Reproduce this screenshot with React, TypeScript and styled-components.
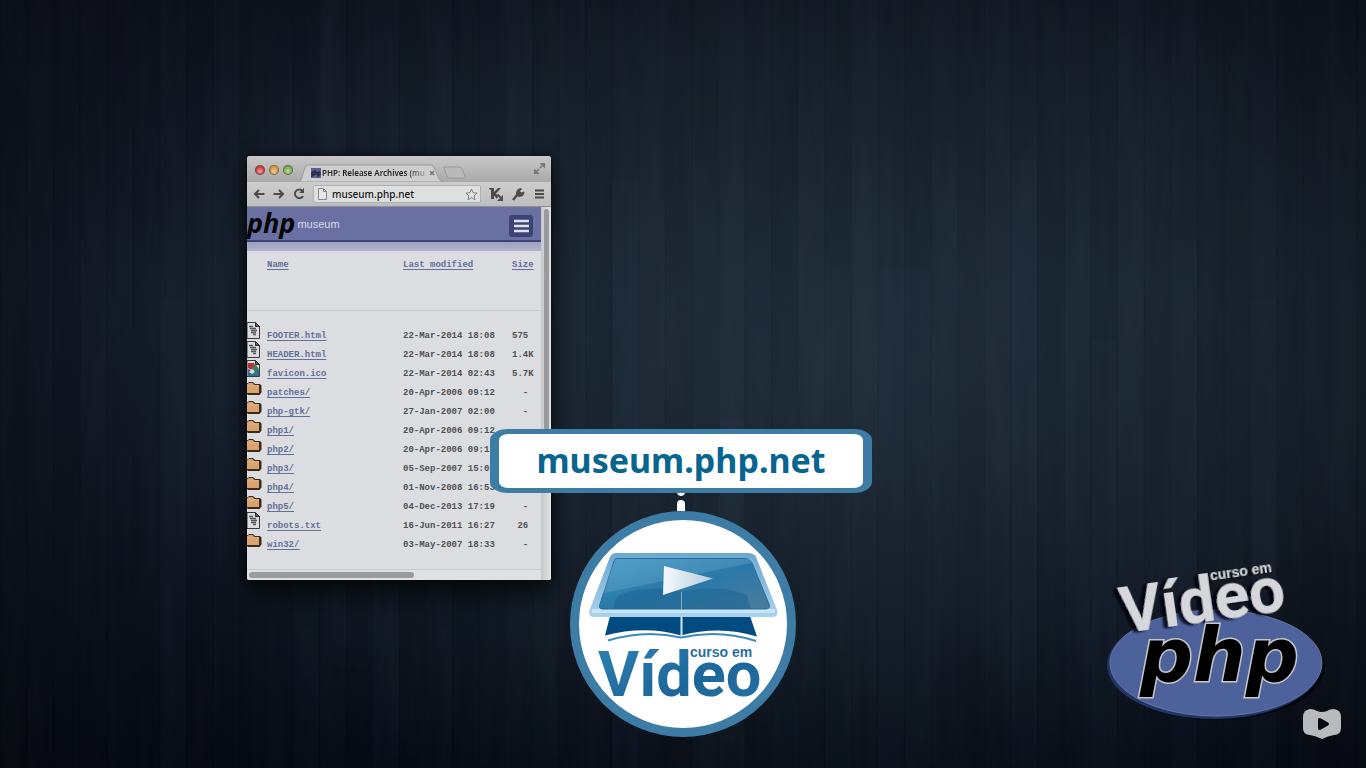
import React from "react";
import styled, { createGlobalStyle } from "styled-components";

const Global = createGlobalStyle`
  *{box-sizing:border-box}
  body{margin:0;background:#0b101b}
  button,input{font:inherit;color:inherit;border:0;padding:0;margin:0;background:none}
`;

const Stage = styled.main`
  position: relative;
  min-height: 100vh;
  overflow: hidden;
  font-family: "Noto Sans", "Open Sans", sans-serif;
  background:
    radial-gradient(ellipse 60% 64% at 62% 46%, rgba(44, 60, 70, 0.62), rgba(38, 54, 64, 0.38) 50%, rgba(20, 30, 44, 0) 100%),
    linear-gradient(90deg, rgba(8, 9, 15, 0.4), rgba(8, 9, 15, 0) 20%, rgba(8, 9, 15, 0) 85%, rgba(8, 9, 15, 0.4)),
    linear-gradient(180deg, #0f131e 0%, #161f2d 38%, #121926 62%, #060a13 100%);
`;

const Wood = styled.svg`
  position: absolute;
  inset: 0;
  width: 100%;
  height: 100%;
`;

const BrowserWindow = styled.section`
  position: absolute;
  top: 156px;
  left: calc(50% - 436px);
  width: 304px;
  background: #dcdde0;
  border-radius: 3px 3px 2px 2px;
  overflow: hidden;
  box-shadow: 0 14px 28px rgba(0, 0, 0, 0.7), 0 0 6px rgba(0, 0, 0, 0.5);
`;

const TitleBar = styled.div`
  display: flex;
  align-items: flex-end;
  height: 26px;
  padding-left: 8px;
  background: linear-gradient(#c8c8c8, #a9a9a9);
`;

const Lights = styled.div`
  display: flex;
  gap: 4px;
  padding-bottom: 7px;
`;

const Light = styled.button<{ $tone: string }>`
  width: 10px;
  height: 10px;
  border-radius: 50%;
  border: 1px solid rgba(60, 50, 50, 0.55);
  background: radial-gradient(circle at 50% 65%, rgba(255, 255, 255, 0.55), transparent 60%), ${(p) => p.$tone};
`;

const Tab = styled.div`
  position: relative;
  display: flex;
  align-items: center;
  width: 144px;
  height: 18px;
  margin-left: 6px;
  padding-left: 12px;
  color: #1e1e1e;
  font-size: 8px;
  font-weight: 600;
  line-height: 18px;
`;

const TabShape = styled.svg`
  position: absolute;
  inset: 0;
`;

const Favicon = styled.svg`
  position: relative;
  flex: none;
`;

const TabTitle = styled.span`
  position: relative;
  width: 104px;
  margin-left: 1px;
  overflow: hidden;
  white-space: nowrap;
  mask-image: linear-gradient(90deg, #000 80%, rgba(0, 0, 0, 0.2));
`;

const TabClose = styled.button`
  position: relative;
  display: flex;
  margin-left: 3px;
`;

const NewTab = styled.button`
  display: flex;
  height: 18px;
`;

const Expand = styled.button`
  display: flex;
  margin: 0 6px 8px auto;
`;

const Toolbar = styled.div`
  display: flex;
  align-items: center;
  height: 25px;
  padding: 0 2px;
  background: linear-gradient(#cdcdcd, #bdbdbd);
  border-bottom: 1px solid #8f8f92;
  color: #4b4b4b;
`;

const ToolButton = styled.button`
  display: flex;
  justify-content: center;
  width: 20px;
  flex: none;
`;

const WideButton = styled(ToolButton)`
  width: 22px;
`;

const AddressBar = styled.div`
  display: flex;
  align-items: center;
  flex: 1;
  min-width: 0;
  height: 18px;
  margin: 0 4px;
  padding: 0 2px 0 4px;
  border: 1px solid #b0b0b0;
  border-radius: 2px;
  background: #dedfe0;
`;

const AddressInput = styled.input`
  flex: 1;
  min-width: 0;
  margin-left: 5px;
  color: #161616;
  font-size: 10px;
  font-weight: 500;
  line-height: 16px;
  outline: none;
`;

const Viewport = styled.div`
  display: grid;
  grid-template-columns: 1fr 10px;
  grid-template-rows: auto 10px;
`;

const Page = styled.div`
  min-width: 0;
  padding-bottom: 14px;
  background: #dcdde0;
  border-bottom: 1px solid #c9cacd;
`;

const PhpHeader = styled.header`
  display: flex;
  align-items: center;
  height: 35px;
  padding-right: 8px;
  background: #6a70a2;
  border-bottom: 2px solid #3a4173;
`;

const PhpMark = styled.a`
  display: flex;
  flex: 1;
  align-items: center;
  color: #d8d9ec;
  font-family: "Liberation Sans", sans-serif;
  font-size: 11px;
  text-decoration: none;
`;

const PhpWord = styled.strong`
  margin-right: 2px;
  margin-top: -2px;
  color: #050505;
  font-family: "Noto Sans", sans-serif;
  font-size: 27px;
  font-style: italic;
  font-weight: 700;
  line-height: 32px;
`;

const MenuButton = styled.button`
  display: flex;
  align-items: center;
  justify-content: center;
  width: 24px;
  height: 22px;
  margin-top: 4px;
  border-radius: 3px;
  background: #3b4276;
`;

const SubBand = styled.div`
  height: 9px;
  background: linear-gradient(#9ea2c0, #b1b3ca);
`;

const Listing = styled.table`
  width: 100%;
  border-collapse: collapse;
  table-layout: fixed;
  color: #505155;
  font-family: "Liberation Mono", monospace;
  font-size: 9px;
  font-weight: 700;
  text-align: left;

  a {
    color: #62709a;
    text-underline-offset: 2px;
  }
  td,
  th {
    height: 19px;
    padding: 0;
    line-height: 19px;
    white-space: pre;
    font-weight: 700;
  }
  thead th {
    height: 59px;
    padding-top: 5px;
    vertical-align: top;
    border-bottom: 1px solid #cbccd0;
  }
  tbody::before {
    content: "";
    display: block;
    height: 16px;
  }
`;

const Col = styled.col<{ $w?: number }>`
  width: ${(p) => (p.$w ? p.$w + "px" : "auto")};
`;

const IconCell = styled.td`
  vertical-align: top;
  svg {
    display: block;
    margin-top: -5px;
  }
`;

const VerticalTrack = styled.div`
  grid-row: 1 / 3;
  grid-column: 2;
  padding: 2px 2px 0 3px;
  background: linear-gradient(90deg, #c6c7c9, #e2e3e4);
`;

const VerticalThumb = styled.div`
  height: 260px;
  border-radius: 3px;
  background: #989a9c;
`;

const HorizontalTrack = styled.div`
  padding: 2px;
  background: #dfe0e2;
`;

const HorizontalThumb = styled.div`
  width: 165px;
  height: 6px;
  border-radius: 3px;
  background: #9a9b9e;
`;

const Pointer = styled.aside`
  position: absolute;
  top: 429px;
  left: calc(50% - 193px);
  display: flex;
  flex-direction: column;
  align-items: center;
  width: 382px;
`;

const Callout = styled.a`
  width: 100%;
  padding-bottom: 2px;
  border: solid #3d7ca5;
  border-width: 5px 9px;
  border-radius: 18px / 11px;
  background: #fff;
  color: #07658f;
  font-size: 34px;
  font-weight: 700;
  line-height: 52px;
  text-align: center;
  text-decoration: none;
`;

const Rope = styled.svg`
  display: block;
`;

const Badge = styled.svg`
  display: block;
  margin-left: 4px;
`;

const CourseLogo = styled.svg`
  position: absolute;
  right: 26px;
  bottom: 38px;
`;

const WatchButton = styled.button`
  position: absolute;
  right: 25px;
  bottom: 29px;
  display: flex;
`;

type Kind = "text" | "image" | "folder";

const files: { kind: Kind; name: string; date: string; size: string }[] = [
  { kind: "text", name: "FOOTER.html", date: "22-Mar-2014 18:08", size: "575" },
  { kind: "text", name: "HEADER.html", date: "22-Mar-2014 18:08", size: "1.4K" },
  { kind: "image", name: "favicon.ico", date: "22-Mar-2014 02:43", size: "5.7K" },
  { kind: "folder", name: "patches/", date: "20-Apr-2006 09:12", size: "  -" },
  { kind: "folder", name: "php-gtk/", date: "27-Jan-2007 02:00", size: "  -" },
  { kind: "folder", name: "php1/", date: "20-Apr-2006 09:12", size: "  -" },
  { kind: "folder", name: "php2/", date: "20-Apr-2006 09:12", size: "  -" },
  { kind: "folder", name: "php3/", date: "05-Sep-2007 15:05", size: "  -" },
  { kind: "folder", name: "php4/", date: "01-Nov-2008 16:53", size: "  -" },
  { kind: "folder", name: "php5/", date: "04-Dec-2013 17:19", size: "  -" },
  { kind: "text", name: "robots.txt", date: "16-Jun-2011 16:27", size: " 26" },
  { kind: "folder", name: "win32/", date: "03-May-2007 18:33", size: "  -" },
];

function FileIcon({ kind }: { kind: Kind }) {
  if (kind === "folder") {
    return (
      <svg width="15" height="17" viewBox="0 0 15 17">
        <path d="M0 4h1l1-1h4l2 2h5l1.500 1.500v7l-2 2.500H1L0 15z" fill="#3a2a1c" />
        <path d="M0 5l2-1h3.500l2 2h4.500v8H0z" fill="#d9a370" />
        <path d="M0 7h12" stroke="#e4b585" />
      </svg>
    );
  }
  return (
    <svg width="15" height="17" viewBox="0 0 15 17">
      <path d="M0 .5h8.500l4 4v12H0z" fill="#dcdcde" stroke="#3a3a3c" />
      <path d="M8.500.5v4h4z" fill="#55565a" stroke="#2e2e30" />
      {kind === "text" ? (
        <path d="M2 4.500h4M3 6.500h6M4 8.500h6M4 10.500h5M6 12.500h3" stroke="#55565a" strokeWidth="1.600" />
      ) : (
        <>
          <path d="M1 3h6l2 4-4 3-4-2z" fill="#b8333a" />
          <path d="M5 8l4-3 3 4-3 4z" fill="#2c8a56" />
          <path d="M1 9l5 2 6-1v6H1z" fill="#2f7189" />
          <path d="M2 12l3-3 3 3-3 2z" fill="#d7dde0" />
        </>
      )}
    </svg>
  );
}

const PLANK = 26.6;
const shades = [5, 2, 6, 1, 3, 6, 2, 4, 1, 5, 3, 6, 0, 4, 2, 5, 1, 6, 3, 0, 5, 2, 6, 3, 1, 4, 5, 0, 3, 6, 1, 5, 0, 3, 6, 2, 4, 1, 3, 6, 2, 6, 1, 4, 3, 6, 5, 2, 6, 4, 1, 5];
const seams = [
  [6, 300], [11, 214], [14, 405], [20, 320], [23, 180], [26, 160], [27, 420], [29, 392], [31, 271],
  [33, 271], [34, 271], [38, 160], [41, 340], [44, 240], [47, 300],
];

function WoodGrain() {
  return (
    <Wood viewBox="0 0 1366 768" preserveAspectRatio="none" aria-hidden="true">
      <defs>
        <filter id="grain" x="0" y="0" width="100%" height="100%">
          <feTurbulence type="fractalNoise" baseFrequency="0.05 0.006" numOctaves="2" seed="7" />
          <feColorMatrix values="0 0 0 0 0.300  0 0 0 0 0.380  0 0 0 0 0.440  0.700 0 0 0 -0.260" />
        </filter>
      </defs>
      <rect width="1366" height="768" filter="url(#grain)" opacity="0.08" />
      {shades.map((shade, i) => (
        <g key={i} fill="#02050c">
          <rect x={i * PLANK} width={PLANK} height="768" opacity={shade * 0.022} />
          <rect x={i * PLANK} width="1" height="768" opacity="0.08" />
        </g>
      ))}
      {seams.map(([i, y]) => (
        <rect key={i} x={i * PLANK} y={y} width={PLANK} height={768 - y} fill="#5b7f92" opacity="0.035" />
      ))}
    </Wood>
  );
}

function CourseBadge() {
  return (
    <Badge width="226" height="226" viewBox="570 511 226 226" role="img" aria-label="Curso em Vídeo">
      <defs>
        <linearGradient id="screen" x1="0" y1="0" x2="1" y2="1">
          <stop offset="0" stopColor="#3f97c4" />
          <stop offset="0.500" stopColor="#2a79a8" />
          <stop offset="1" stopColor="#4d7c9b" />
        </linearGradient>
        <linearGradient id="frame" x1="0" y1="0" x2="0" y2="1">
          <stop offset="0" stopColor="#6ba8d2" />
          <stop offset="1" stopColor="#a9d2ee" />
        </linearGradient>
        <linearGradient id="play" x1="0" y1="0" x2="1" y2="0">
          <stop offset="0" stopColor="#f4f8fc" />
          <stop offset="1" stopColor="#b6cddd" />
        </linearGradient>
        <linearGradient id="word" x1="0" y1="0" x2="1" y2="1">
          <stop offset="0" stopColor="#2f83b5" />
          <stop offset="0.600" stopColor="#1d6699" />
          <stop offset="1" stopColor="#2673a6" />
        </linearGradient>
      </defs>
      <circle cx="683" cy="624" r="108.500" fill="#fff" stroke="#3d7ca5" strokeWidth="9" />
      <path d="M610 616L605 635.500Q645 625 681 635.500Q720 625 757 636.500L750 616Z" fill="#024b80" />
      <path d="M681.500 616v20" stroke="#d6e9f5" strokeWidth="2" />
      <path d="M608 640.500Q645 629 681 637.500Q719 629 756 641" fill="none" stroke="#3d8ab9" strokeWidth="2" />
      <path d="M616 553H748Q754 553 756 557L777 610Q779 617 772 617H594Q587 617 590 609L610 557Q612 553 616 553Z" fill="url(#frame)" />
      <path d="M592 611H775" stroke="#c6e4f8" strokeWidth="4" />
      <path d="M617 558.500H744Q750 558.500 752 563L769 604Q771 609 765 609H603Q598 609 600 604L614 561Q615 558.500 617 558.500Z" fill="url(#screen)" stroke="#286d95" />
      <path d="M617 596Q650 583 681 592Q719 583 747 595L751 609H613Z" fill="#1b6496" opacity="0.550" />
      <path d="M599 594L756 562L751 559H616Z" fill="#a8d2e8" opacity="0.180" />
      <path d="M681.500 592v17" stroke="#7db0ce" />
      <path d="M664 566L713 578.500L663 595Z" fill="url(#play)" />
      <text x="598" y="696" fontFamily="Roboto, Liberation Sans, sans-serif" fontWeight="700" fontSize="63" fill="url(#word)">Vídeo</text>
      <text x="690" y="657" fontFamily="Liberation Sans, sans-serif" fontWeight="700" fontSize="14" fill="#286f9f">curso em</text>
    </Badge>
  );
}

function PhpCourseLogo() {
  return (
    <CourseLogo width="250" height="190" viewBox="1090 540 250 190" role="img" aria-label="Curso em Vídeo PHP">
      <defs>
        <filter id="drop" x="-20%" y="-20%" width="140%" height="140%">
          <feDropShadow dx="-5" dy="1" stdDeviation="1" floodColor="#020409" floodOpacity="0.850" />
        </filter>
      </defs>
      <ellipse cx="1217" cy="667" rx="108" ry="53" fill="#03060d" />
      <ellipse cx="1214" cy="665" rx="107" ry="54" fill="#1f3566" />
      <ellipse cx="1216" cy="663" rx="106" ry="53" fill="#4d629b" stroke="#66759f" strokeWidth="1" />
      <g transform="translate(1139 631) rotate(-8)" filter="url(#drop)" fill="#d6d7da">
        <text x="-16" y="0" fontFamily="Roboto, Liberation Sans, sans-serif" fontWeight="700" fontSize="64">Vídeo</text>
        <text x="78" y="-40" fontFamily="Liberation Sans, sans-serif" fontWeight="700" fontSize="14">curso em</text>
      </g>
      <text x="1140" y="681" fontFamily="DejaVu Sans, sans-serif" fontWeight="700" fontStyle="italic" fontSize="74" fill="#000" stroke="#c4c5c8" strokeWidth="3" paintOrder="stroke">php</text>
    </CourseLogo>
  );
}

export default function App() {
  return (
    <Stage>
      <Global />
      <WoodGrain />
      <BrowserWindow aria-label="PHP: Release Archives">
        <TitleBar>
          <Lights>
            <Light $tone="#cf3f45" aria-label="Close" />
            <Light $tone="#d79a3c" aria-label="Minimize" />
            <Light $tone="#7fae4d" aria-label="Zoom" />
          </Lights>
          <Tab>
            <TabShape width="144" height="18" viewBox="0 0 144 18">
              <path d="M0 18C4 17 4 2 9 1H132C137 2 138 17 144 18Z" fill="#cecece" stroke="#999" />
            </TabShape>
            <Favicon width="10" height="10" viewBox="0 0 10 10">
              <path d="M0 0h10v10H0z" fill="#5b6094" />
              <path d="M1 9V4h2v3H1M4 2v5M4 4h2v3M7 9V4h2v3H7" stroke="#17182c" fill="none" />
            </Favicon>
            <TabTitle>PHP: Release Archives (mu</TabTitle>
            <TabClose aria-label="Close tab">
              <svg width="6" height="6" viewBox="0 0 6 6"><path d="M1 1l4 4M5 1L1 5" stroke="#777" strokeWidth="1.500" /></svg>
            </TabClose>
          </Tab>
          <NewTab aria-label="New tab">
            <svg width="24" height="18" viewBox="0 0 24 18"><path d="M1 4.500Q0 3 2 3H16Q18 3 19 5L22 12Q23 14 21 14H7Q5 14 4 12Z" fill="#b9b9b9" stroke="#989898" /></svg>
          </NewTab>
          <Expand aria-label="Full screen">
            <svg width="11" height="11" viewBox="0 0 11 11"><path d="M5.500 0H11v5.500zM0 5.500V11h5.500z" fill="#777" /><path d="M6 5l3-3M2 9l3-3" stroke="#777" strokeWidth="1.500" /></svg>
          </Expand>
        </TitleBar>
        <Toolbar>
          <ToolButton aria-label="Back">
            <svg width="12" height="10" viewBox="0 0 12 10"><path d="M6 1L2 5l4 4M2 5h9.500" fill="none" stroke="currentColor" strokeWidth="2" /></svg>
          </ToolButton>
          <ToolButton aria-label="Forward">
            <svg width="12" height="10" viewBox="0 0 12 10"><path d="M6 1l4 4-4 4M10 5H.5" fill="none" stroke="currentColor" strokeWidth="2" /></svg>
          </ToolButton>
          <ToolButton aria-label="Reload">
            <svg width="12" height="12" viewBox="0 0 12 12"><path d="M9.500 3A4.300 4.300 0 1 0 10 8" fill="none" stroke="currentColor" strokeWidth="2" /><path d="M11 0v5H6z" fill="currentColor" /></svg>
          </ToolButton>
          <AddressBar>
            <svg width="9" height="12" viewBox="0 0 9 12"><path d="M.5.500H5.500L8.500 3.500V11.500H.5ZM5.500.500V3.500H8.500" fill="#e6e6e6" stroke="#888" /></svg>
            <AddressInput aria-label="Address" defaultValue="museum.php.net" />
            <svg width="13" height="13" viewBox="0 0 13 13"><path d="M6.500 1l1.600 3.700 4 .4-3 2.700.9 4-3.500-2.100L3 11.800l.9-4-3-2.700 4-.4z" fill="#e4e4e4" stroke="#808080" /></svg>
          </AddressBar>
          <WideButton aria-label="Extension">
            <svg width="15" height="14" viewBox="0 0 15 14"><path d="M0 1h5v4L9 1h3L7 6.500 9 9 8 12 5 8.500V12H2V3L0 2z" fill="currentColor" /><path d="M8.500 7.500l3 3" stroke="currentColor" strokeWidth="2" /><path d="M14 8v6H8z" fill="currentColor" /></svg>
          </WideButton>
          <WideButton aria-label="Tools">
            <svg width="13" height="13" viewBox="0 0 13 13"><path d="M1 12l5-6" stroke="currentColor" strokeWidth="2.500" /><path d="M4 4L6 1l3-1 1 1-2 2 1 1.500 3-1 .5 1L11 8 7 9 4 7z" fill="currentColor" /></svg>
          </WideButton>
          <ToolButton aria-label="Menu">
            <svg width="9" height="10" viewBox="0 0 9 10"><path d="M0 1.500h9M0 5h9M0 8.500h9" stroke="currentColor" strokeWidth="2" /></svg>
          </ToolButton>
        </Toolbar>
        <Viewport>
          <Page>
            <PhpHeader>
              <PhpMark href="#home"><PhpWord>php</PhpWord>museum</PhpMark>
              <MenuButton aria-label="Open menu">
                <svg width="15" height="14" viewBox="0 0 15 14"><path d="M0 2h15M0 7h15M0 12h15" stroke="#dfe1ee" strokeWidth="2.500" /></svg>
              </MenuButton>
            </PhpHeader>
            <SubBand />
            <Listing>
              <colgroup>
                <Col $w={20} />
                <Col $w={136} />
                <Col $w={109} />
                <Col />
              </colgroup>
              <thead>
                <tr>
                  <th />
                  <th><a href="#name">Name</a></th>
                  <th><a href="#modified">Last modified</a></th>
                  <th><a href="#size">Size</a></th>
                </tr>
              </thead>
              <tbody>
                {files.map((f) => (
                  <tr key={f.name}>
                    <IconCell><FileIcon kind={f.kind} /></IconCell>
                    <td><a href={"#" + f.name}>{f.name}</a></td>
                    <td>{f.date}</td>
                    <td>{f.size}</td>
                  </tr>
                ))}
              </tbody>
            </Listing>
          </Page>
          <VerticalTrack><VerticalThumb /></VerticalTrack>
          <HorizontalTrack><HorizontalThumb /></HorizontalTrack>
        </Viewport>
      </BrowserWindow>
      <Pointer>
        <Callout href="#museum">museum.php.net</Callout>
        <Rope width="10" height="18" viewBox="0 0 10 18">
          <path d="M1 0h8q-1 3-4 3t-4-3zM1 18v-7q0-4 4-4t4 4v7z" fill="#fff" />
        </Rope>
        <CourseBadge />
      </Pointer>
      <PhpCourseLogo />
      <WatchButton aria-label="Watch video">
        <svg width="38" height="30" viewBox="0 0 38 30">
          <path d="M7 0Q11 0 14 2Q19 4 24 2Q27 0 31 0Q38 1 38 8V19Q38 26 31 26Q25 27 19 30Q13 27 7 26Q0 26 0 19V8Q0 1 7 0Z" fill="#b9babd" />
          <path d="M15 11Q15 8 18 9.500L25 13.500Q27 15 25 16.500L18 20.500Q15 22 15 19Z" fill="#070b14" />
        </svg>
      </WatchButton>
    </Stage>
  );
}
